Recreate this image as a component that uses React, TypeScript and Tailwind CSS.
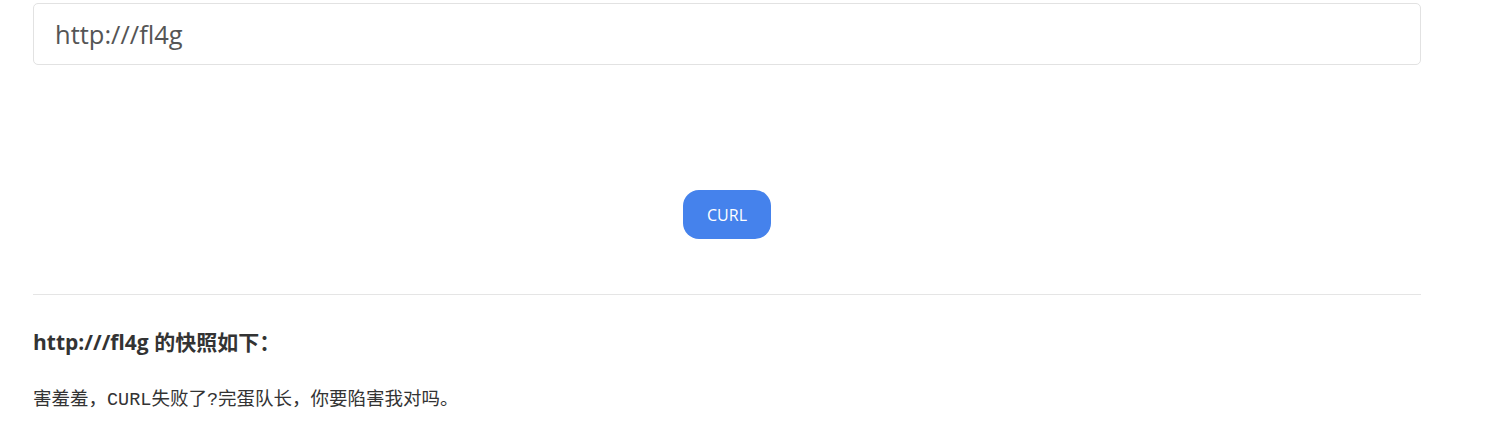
export default function App() {
  return (
    <div className="min-h-screen bg-white font-['Open_Sans','Noto_Sans_CJK_SC',sans-serif] text-[#333]">
      <div className="ml-[33px] w-[1388px] pt-[3px]">
        <input
          type="text"
          defaultValue="http:///fl4g"
          className="block h-[62px] w-full rounded-[5px] border border-[#e2e2e2] px-[21px] text-[25.5px] text-[#555] outline-none"
        />
        <div className="flex justify-center pt-[125px]">
          <button className="h-[49px] w-[88px] rounded-[16px] bg-[#4582ec] text-[16px] text-white">
            CURL
          </button>
        </div>
        <hr className="mt-[55px] border-t border-[#e5e5e5]" />
        <h4 className="mt-[32px] text-[21px] leading-[30px] font-bold text-[#333]">
          http:///fl4g 的快照如下：
        </h4>
        <p className="mt-[30px] font-['Liberation_Mono','Noto_Sans_CJK_SC',monospace] text-[18.5px] text-[#333]">
          害羞羞，CURL失败了?完蛋队长，你要陷害我对吗。
        </p>
      </div>
    </div>
  );
}
